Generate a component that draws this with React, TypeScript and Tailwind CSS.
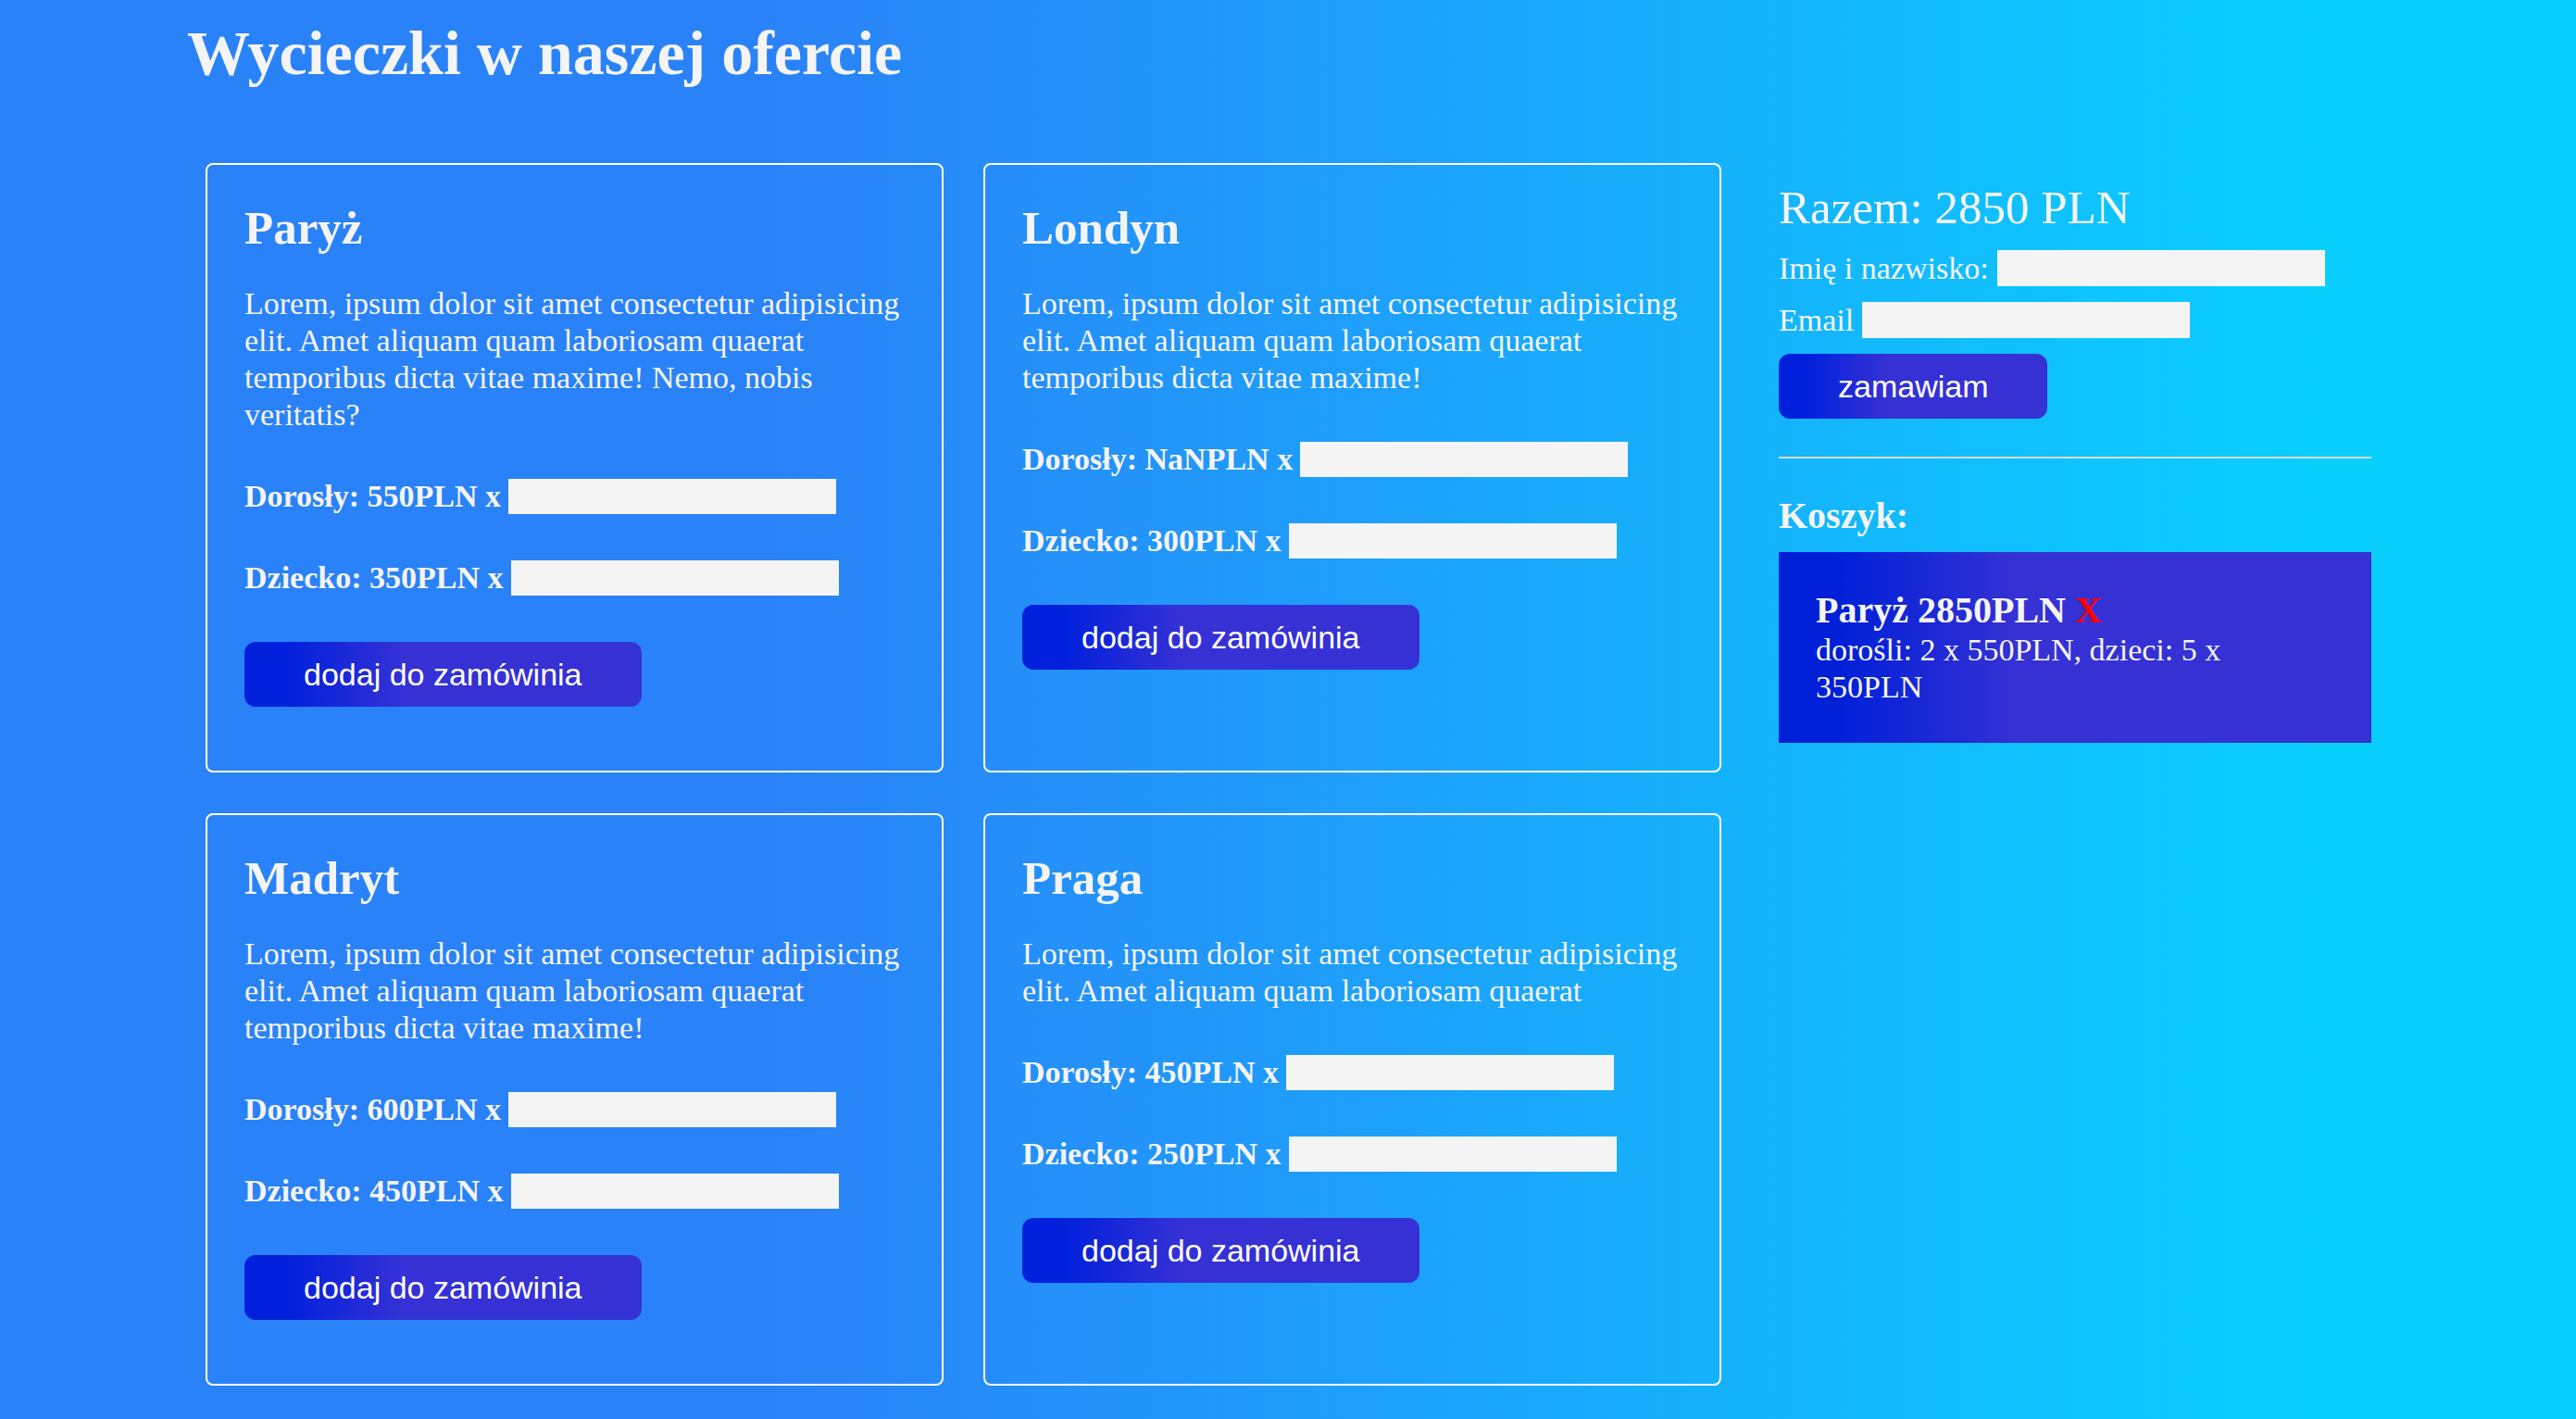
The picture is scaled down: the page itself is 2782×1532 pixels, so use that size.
import React from "react";

type Trip = { name: string; desc: string; adult: string; child: string };

const trips: Trip[] = [
  {
    name: "Paryż",
    desc: "Lorem, ipsum dolor sit amet consectetur adipisicing elit. Amet aliquam quam laboriosam quaerat temporibus dicta vitae maxime! Nemo, nobis veritatis?",
    adult: "550",
    child: "350",
  },
  {
    name: "Londyn",
    desc: "Lorem, ipsum dolor sit amet consectetur adipisicing elit. Amet aliquam quam laboriosam quaerat temporibus dicta vitae maxime!",
    adult: "NaN",
    child: "300",
  },
  {
    name: "Madryt",
    desc: "Lorem, ipsum dolor sit amet consectetur adipisicing elit. Amet aliquam quam laboriosam quaerat temporibus dicta vitae maxime!",
    adult: "600",
    child: "450",
  },
  {
    name: "Praga",
    desc: "Lorem, ipsum dolor sit amet consectetur adipisicing elit. Amet aliquam quam laboriosam quaerat",
    adult: "450",
    child: "250",
  },
];

function GradButton({ children, className = "" }: { children: React.ReactNode; className?: string }) {
  return (
    <button
      type="button"
      className={
        "inline-flex items-center h-[70px] px-[64px] rounded-[12px] bg-linear-to-r/srgb from-[#0020dc] from-10% to-[#3531d5] to-40% text-white text-[34px] leading-[39px] font-['Liberation_Sans',Arial,sans-serif] " +
        className
      }
    >
      {children}
    </button>
  );
}

function Card({ t }: { t: Trip }) {
  return (
    <div className="border-2 border-white rounded-[8px] pl-[40px] pr-[40px] pt-[38px] pb-[69px]">
      <h2 className="text-[51px] leading-[60px] font-bold">{t.name}</h2>
      <p className="mt-[32px] text-[34px] leading-[40px]">{t.desc}</p>
      <div className="mt-[48px] flex items-center h-[40px] gap-[8px]">
        <span className="font-bold text-[34px] leading-[40px]">Dorosły: {t.adult}PLN x</span>
        <input className="w-[354px] h-[38px] bg-[#f4f4f4] border-0 outline-none" />
      </div>
      <div className="mt-[48px] flex items-center h-[40px] gap-[8px]">
        <span className="font-bold text-[34px] leading-[40px]">Dziecko: {t.child}PLN x</span>
        <input className="w-[354px] h-[38px] bg-[#f4f4f4] border-0 outline-none" />
      </div>
      <GradButton className="mt-[49px]">dodaj do zamówinia</GradButton>
    </div>
  );
}

export default function App() {
  return (
    <div className="min-h-screen w-full bg-linear-to-r/srgb from-[#2a82f8] from-30% to-[#09cfff] to-90% text-[#f4f4f4] font-['Liberation_Serif','Times_New_Roman',serif]">
      <div className="pl-[202px] pt-[18px] pb-[34px]">
        <h1 className="text-[68px] leading-[78px] font-bold">Wycieczki w naszej ofercie</h1>
        <div className="mt-[80px] flex items-start">
          <div className="ml-[20px] grid grid-cols-[797px_797px] gap-x-[43px] gap-y-[44px]">
            {trips.map((t) => (
              <Card key={t.name} t={t} />
            ))}
          </div>
          <div className="ml-[62px] w-[640px] mt-[19px] flex flex-col">
            <div className="text-[51px] leading-[58px]">Razem: 2850 PLN</div>
            <div className="mt-[17px] flex items-center h-[39px] gap-[9px]">
              <span className="text-[34px] leading-[40px]">Imię i nazwisko:</span>
              <input className="w-[354px] h-[39px] bg-[#f4f4f4] border-0 outline-none" />
            </div>
            <div className="mt-[17px] flex items-center h-[39px] gap-[9px]">
              <span className="text-[34px] leading-[40px]">Email</span>
              <input className="w-[354px] h-[39px] bg-[#f4f4f4] border-0 outline-none" />
            </div>
            <div className="mt-[17px]">
              <GradButton>zamawiam</GradButton>
            </div>
            <hr className="mt-[41px] h-[2px] border-0 bg-[#d8dce2]" />
            <h3 className="mt-[39px] text-[40px] leading-[46px] font-bold">Koszyk:</h3>
            <div className="mt-[16px] bg-linear-to-r/srgb from-[#0020d8] from-10% to-[#3531d4] to-40% pl-[40px] pr-[44px] pt-[40px] pb-[40px]">
              <div className="text-[40px] leading-[46px] font-bold">
                Paryż 2850PLN <span className="text-[#ff0000]">X</span>
              </div>
              <div className="text-[34px] leading-[40px]">dorośli: 2 x 550PLN, dzieci: 5 x 350PLN</div>
            </div>
          </div>
        </div>
      </div>
    </div>
  );
}
